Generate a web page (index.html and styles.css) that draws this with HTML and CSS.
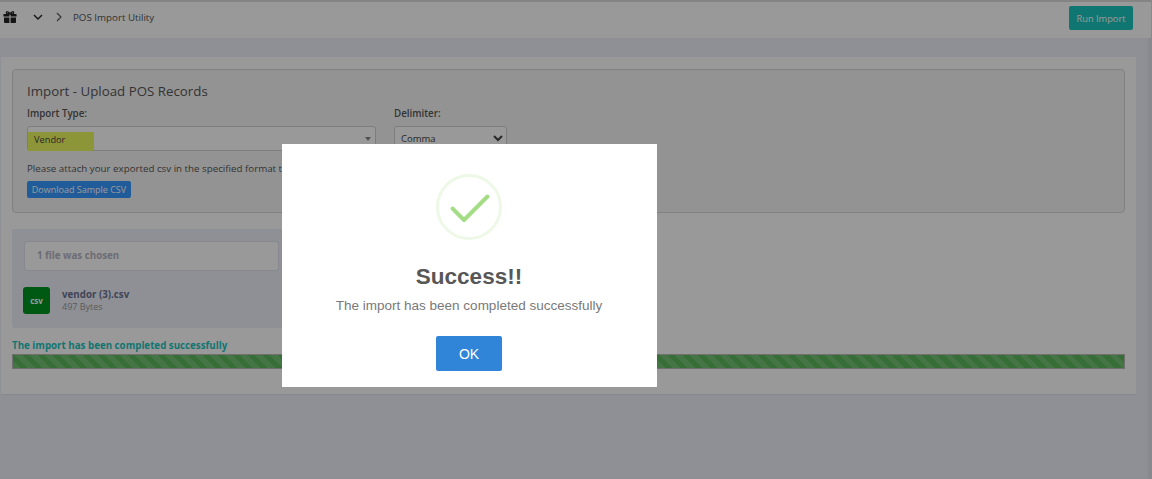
FILE: index.html
```html
<!DOCTYPE html>
<html lang="en">
	<head>
		<meta charset="UTF-8" />
		<meta name="viewport" content="width=device-width, initial-scale=1.0" />
		<title>POS Import Utility</title>
		<link rel="stylesheet" href="styles.css">
	</head>
	<body>
		<div class="topbar">
			<div class="crumbs">
				<svg class="gift" width="14" height="12" viewBox="0 0 14 12">
					<path d="M1 3h5.400v2.600H0.400V3.600Q0.400 3 1 3zM7.600 3H13q.6 0 .6.6v2H7.600zM1 6.600h5.400V12H2q-1 0-1-1zM7.600 6.600H13V11q0 1-1 1H7.600z" fill="#222"/>
					<path d="M7 3C5.600.6 3.400.2 3.300 1.600 3.200 3 5.400 3 7 3c1.600 0 3.800 0 3.700-1.400C10.600.2 8.400.6 7 3z" fill="none" stroke="#222" stroke-width="1.2"/>
				</svg>
				<svg class="chev-down" width="10" height="6" viewBox="0 0 10 6"><path d="M1 1l4 4 4-4" fill="none" stroke="#222" stroke-width="1.4"/></svg>
				<svg class="chev-right" width="6" height="10" viewBox="0 0 6 10"><path d="M1 1l4 4-4 4" fill="none" stroke="#555" stroke-width="1.1"/></svg>
				<span class="crumb-title">POS Import Utility</span>
			</div>
			<button type="button" class="btn-run">Run Import</button>
		</div>

		<div class="page">
			<div class="card">
				<div class="import-box">
					<h3>Import - Upload POS Records</h3>
					<div class="fields">
						<div class="field field-type">
							<label>Import Type:</label>
							<div class="fake-select">
								<span class="marker"></span>
								<span class="fake-value">Vendor</span>
								<span class="fake-arrow"></span>
							</div>
						</div>
						<div class="field field-delim">
							<label for="delimiter">Delimiter:</label>
							<select id="delimiter"><option>Comma</option></select>
						</div>
					</div>
					<p class="hint">Please attach your exported csv in the specified format to import</p>
					<button type="button" class="btn-sample">Download Sample CSV</button>
				</div>

				<div class="upload">
					<div class="chosen">1 file was chosen</div>
					<div class="file-row">
						<div class="file-icon">csv</div>
						<div>
							<div class="file-name">vendor (3).csv</div>
							<div class="file-size">497 Bytes</div>
						</div>
					</div>
				</div>

				<div class="done-text">The import has been completed successfully</div>
				<div class="progress"><div class="progress-bar"></div></div>
			</div>
		</div>

		<div class="overlay">
			<div class="modal">
				<svg class="tick" width="66" height="66" viewBox="0 0 66 66">
					<circle cx="33" cy="33" r="31.500" fill="none" stroke="#a5dc86" stroke-opacity="0.2" stroke-width="3"/>
					<path d="M16.500 34.500L28 46L51.500 22.500" fill="none" stroke="#a5dc86" stroke-width="4" stroke-linecap="round" stroke-linejoin="round"/>
				</svg>
				<h2>Success!!</h2>
				<p>The import has been completed successfully</p>
				<button type="button" class="btn-ok">OK</button>
			</div>
		</div>
	</body>
</html>
```

FILE: styles.css
```css
* {
	box-sizing: border-box;
}
html, body {
	height: 100%;
}
body {
	margin: 0;
	font-family: 'Open Sans', sans-serif;
	font-size: 9.75px;
	color: #3f4254;
	background-color: #eef0f8;
	border-right: 1px solid #e4e4e4;
	box-shadow: inset -4px 0 4px -2px rgba(0, 0, 0, 0.08);
	overflow: hidden;
}
.topbar {
	height: 38px;
	background-color: #fff;
	border-top: 2px solid #ddd;
	display: flex;
	justify-content: space-between;
	padding: 4px 18px 0 3px;
}
.crumbs {
	display: flex;
	align-items: center;
	height: 22px;
}
.chev-down {
	margin-left: 16px;
}
.chev-right {
	margin-left: 13px;
}
.crumb-title {
	margin-left: 11px;
	color: #555;
}
.btn-run {
	width: 64px;
	height: 24px;
	background-color: #1bc5bd;
	border: 0;
	border-radius: 2px;
	color: #fff;
	font-family: inherit;
	font-size: 9.25px;
	padding: 0;
}
.page {
	padding: 19px 15px 0 1px;
}
.card {
	height: 338px;
	background-color: #fff;
	padding: 12px 11px 0;
	border-bottom: 1px solid #e2e3e8;
}
.import-box {
	height: 144px;
	background-color: #f5f5f5;
	border: 1px solid #d8d8d8;
	border-radius: 4px;
	padding: 11px 14px 0;
}
h3 {
	margin: 0;
	font-size: 13.3px;
	font-weight: 400;
	line-height: 20px;
	color: #555;
}
.fields {
	display: flex;
	margin-top: 6px;
}
.field label {
	display: block;
	font-weight: 600;
	line-height: 14px;
	margin-bottom: 5px;
	color: #555;
}
.field-type {
	width: 349px;
}
.field-delim {
	margin-left: 18px;
}
.fake-select {
	position: relative;
	height: 25px;
	background-color: #fff;
	border: 1px solid #d0d0d0;
	border-radius: 3px;
	display: flex;
	align-items: center;
	padding: 2px 0 0 6px;
}
.marker {
	position: absolute;
	left: 0;
	top: 5px;
	width: 66px;
	height: 19px;
	background-color: #ecf95f;
}
.fake-value {
	position: relative;
	font-size: 9.25px;
	color: #444;
}
.fake-arrow {
	position: absolute;
	right: 4px;
	top: 10px;
	border-top: 4px solid #888;
	border-left: 3px solid transparent;
	border-right: 3px solid transparent;
}
select {
	width: 113px;
	height: 25px;
	border: 1px solid #d0d0d0;
	border-radius: 3px;
	background-color: #fff;
	font-family: inherit;
	font-size: 9.5px;
	color: #444;
	padding-left: 2px;
}
.hint {
	margin: 11px 0 0;
	line-height: 14px;
	color: #555;
}
.btn-sample {
	display: block;
	width: 104px;
	height: 17px;
	margin-top: 5px;
	background-color: #3699ff;
	border: 0;
	border-radius: 2px;
	color: #fff;
	font-family: inherit;
	font-size: 9px;
	padding: 0;
}
.upload {
	margin-top: 16px;
	width: 560px;
	height: 99px;
	background-color: #eef0f8;
	border-radius: 3px;
	padding: 12px;
}
.chosen {
	width: 255px;
	height: 30px;
	background-color: #fff;
	border: 1px solid #dfe1ee;
	border-radius: 3px;
	font-weight: 700;
	line-height: 28px;
	padding-left: 12px;
	color: #b5b5c3;
}
.file-row {
	display: flex;
	align-items: center;
	margin-top: 16px;
	margin-left: -1px;
}
.file-icon {
	width: 27px;
	height: 27px;
	background-color: #009421;
	border-radius: 3px;
	color: #fff;
	font-size: 8px;
	font-weight: 700;
	line-height: 27px;
	text-align: center;
	margin-right: 12px;
}
.file-name {
	font-weight: 700;
	line-height: 13px;
	color: #6c7293;
}
.file-size {
	font-size: 9px;
	line-height: 12px;
	color: #999;
}
.done-text {
	margin-top: 11px;
	margin-bottom: 1px;
	font-weight: 700;
	line-height: 14px;
	color: #1bc5bd;
}
.progress {
	height: 15px;
	border: 1px solid #bbb;
}
.progress-bar {
	height: 100%;
	background-color: #5cb85c;
	background-image: repeating-linear-gradient(45deg, rgba(255, 255, 255, 0.15) 0 5.3px, transparent 5.3px 10.6px);
}
.overlay {
	position: fixed;
	top: 0;
	left: 0;
	right: 0;
	bottom: 0;
	background-color: rgba(0, 0, 0, 0.4);
}
.modal {
	position: absolute;
	left: 282px;
	top: 144px;
	width: 375px;
	height: 243px;
	background-color: #fff;
	text-align: center;
	font-family: 'Liberation Sans', sans-serif;
	padding: 30px 1px 0 0;
}
.tick {
	display: block;
	margin: 0 auto;
}
.modal h2 {
	margin: 23px 0 0;
	font-size: 22.5px;
	line-height: 28px;
	font-weight: 700;
	color: #575757;
}
.modal p {
	margin: 5px 0 0;
	font-size: 13.5px;
	line-height: 20px;
	color: #797979;
}
.btn-ok {
	width: 66px;
	height: 35px;
	margin-top: 20px;
	background-color: #3085d8;
	border: 0;
	border-radius: 2px;
	color: #fff;
	font-family: inherit;
	font-size: 14px;
}
```
